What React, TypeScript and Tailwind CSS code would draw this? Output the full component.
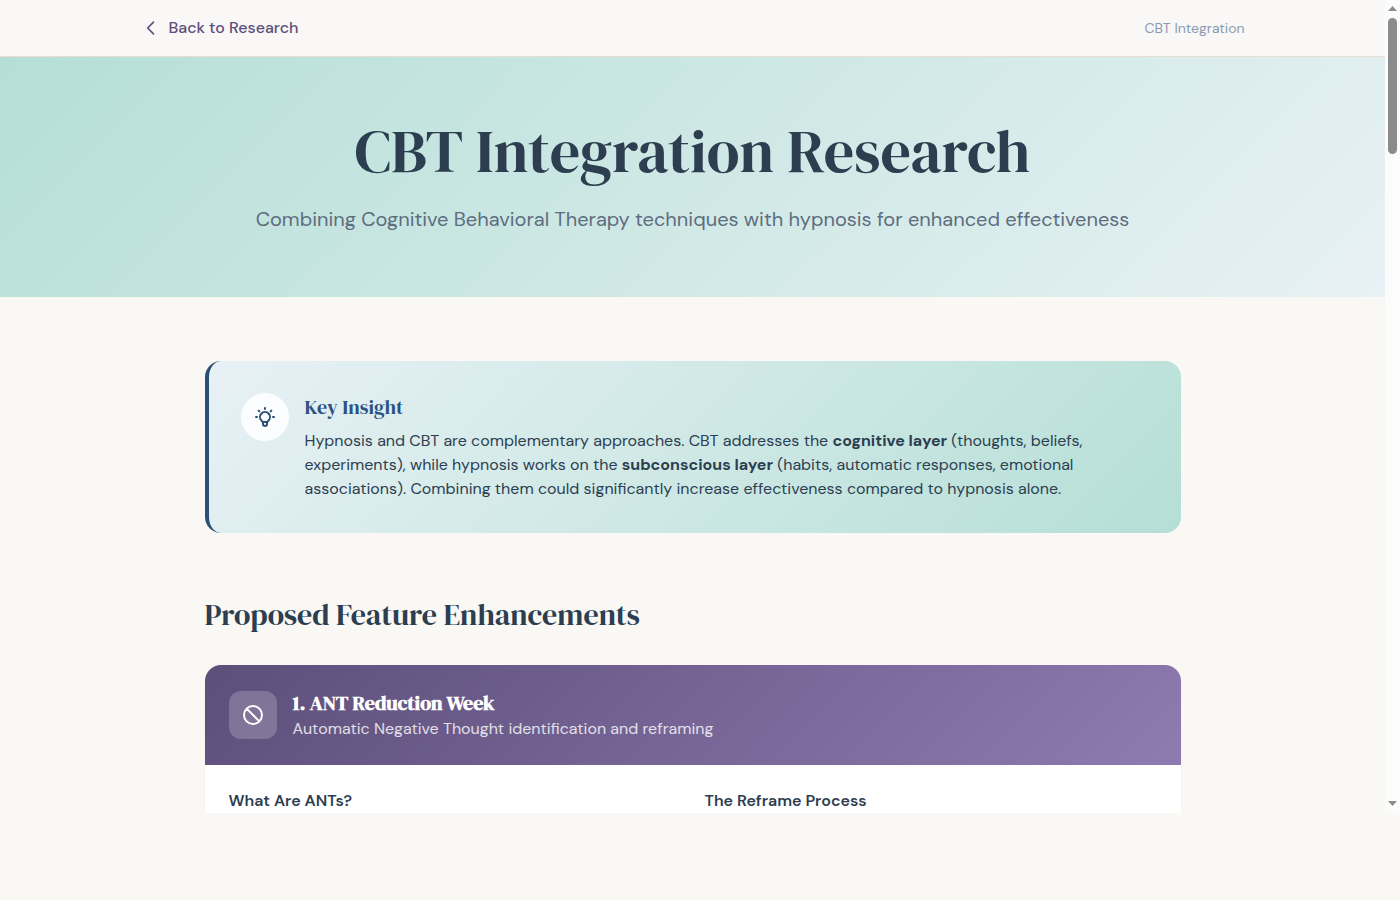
const enhancements = [
  {
    title: "1. ANT Reduction Week",
    subtitle: "Automatic Negative Thought identification and reframing",
    columns: ["What Are ANTs?", "The Reframe Process"],
  },
];

interface IconProps {
  path: string;
  className: string;
}

const Icon = ({ path, className }: IconProps) => (
  <svg
    className={className}
    fill="none"
    stroke="currentColor"
    strokeWidth={2}
    strokeLinecap="round"
    strokeLinejoin="round"
    viewBox="0 0 24 24"
    aria-hidden="true"
  >
    <path d={path} />
  </svg>
);

const CHEVRON_LEFT = "M15 19l-7-7 7-7";
const LIGHTBULB =
  "M9.663 17h4.673M12 3v1m6.364 1.636l-.707.707M21 12h-1M4 12H3m3.343-5.657l-.707-.707m2.828 9.9a5 5 0 117.072 0l-.548.547A3.374 3.374 0 0014 18.469V19a2 2 0 11-4 0v-.531c0-.895-.356-1.754-.988-2.386l-.548-.547z";
const BAN =
  "M18.364 18.364A9 9 0 005.636 5.636m12.728 12.728A9 9 0 015.636 5.636m12.728 12.728L5.636 5.636";

function PageScrollbar() {
  return (
    <div
      className="flex w-[15px] shrink-0 flex-col items-center justify-between bg-[#fcfcfc] pt-[6px] pb-[7px]"
      aria-hidden="true"
    >
      <div className="flex flex-col items-center gap-[7px]">
        <svg className="h-[5px] w-[9px] fill-[#8b8b8b]" viewBox="0 0 9 5">
          <path d="M0 5L4.5 0L9 5z" />
        </svg>
        <div className="h-[136px] w-[9px] rounded-full bg-[#8b8b8b]" />
      </div>
      <svg className="h-[5px] w-[9px] fill-[#8b8b8b]" viewBox="0 0 9 5">
        <path d="M0 0L4.5 5L9 0z" />
      </svg>
    </div>
  );
}

export default function App() {
  return (
    <div className="min-h-screen bg-[#f9f8f4] font-['DM_Sans','Open_Sans',sans-serif] text-[#2c3e50]">
      <div className="flex h-[calc(100vh-87px)] overflow-hidden">
        <div className="min-w-0 flex-1 overflow-hidden">
          <header className="border-b border-[#e8ddd4] bg-[#f9f8f6]">
            <div className="mx-auto flex max-w-6xl items-center justify-between px-6 py-4">
              <a
                href="#"
                className="flex items-center gap-2 text-base font-medium text-[#5d4e7b]"
              >
                <Icon path={CHEVRON_LEFT} className="h-5 w-5" />
                Back to Research
              </a>
              <span className="text-sm text-[#8a9bb0]">CBT Integration</span>
            </div>
          </header>

          <section className="bg-[linear-gradient(135deg,#b5dfd6_0%,#e8f1f5_100%)] px-6 py-16 text-center">
            <h1 className="mb-6 font-['DM_Serif_Display','Liberation_Serif',serif] text-6xl font-normal">
              CBT Integration Research
            </h1>
            <p className="text-xl text-[#5d6d7e]">
              Combining Cognitive Behavioral Therapy techniques with hypnosis
              for enhanced effectiveness
            </p>
          </section>

          <main className="mx-auto max-w-5xl px-6 py-16">
            <section className="mb-16 flex items-start gap-4 rounded-2xl border-l-4 border-[#2c5075] bg-[linear-gradient(135deg,#e8f1f5_0%,#b5dfd6_100%)] p-8">
              <div className="flex h-12 w-12 shrink-0 items-center justify-center rounded-full bg-white/90 text-[#2c5075]">
                <Icon path={LIGHTBULB} className="h-6 w-6" />
              </div>
              <div>
                <h2 className="mb-2 font-['DM_Serif_Display','Liberation_Serif',serif] text-xl font-normal text-[#2c5282]">
                  Key Insight
                </h2>
                <p>
                  Hypnosis and CBT are complementary approaches. CBT addresses
                  the <strong>cognitive layer</strong> (thoughts, beliefs,
                  experiments), while hypnosis works on the{" "}
                  <strong>subconscious layer</strong> (habits, automatic
                  responses, emotional associations). Combining them could
                  significantly increase effectiveness compared to hypnosis
                  alone.
                </p>
              </div>
            </section>

            <h2 className="mb-8 font-['DM_Serif_Display','Liberation_Serif',serif] text-3xl font-normal">
              Proposed Feature Enhancements
            </h2>

            {enhancements.map((item) => (
              <article
                key={item.title}
                className="overflow-hidden rounded-2xl bg-white shadow-xs"
              >
                <div className="flex items-center gap-4 bg-[linear-gradient(135deg,#5d4e7a_0%,#8e7bb0_100%)] p-6 text-white">
                  <div className="flex h-12 w-12 items-center justify-center rounded-xl bg-white/20">
                    <Icon path={BAN} className="h-6 w-6" />
                  </div>
                  <div>
                    <h3 className="font-['DM_Serif_Display','Liberation_Serif',serif] text-xl font-bold">
                      {item.title}
                    </h3>
                    <p className="text-white/80">{item.subtitle}</p>
                  </div>
                </div>
                <div className="grid grid-cols-2 gap-6 p-6 pb-24">
                  {item.columns.map((heading) => (
                    <h4 key={heading} className="font-semibold">
                      {heading}
                    </h4>
                  ))}
                </div>
              </article>
            ))}
          </main>
        </div>
        <PageScrollbar />
      </div>
    </div>
  );
}
